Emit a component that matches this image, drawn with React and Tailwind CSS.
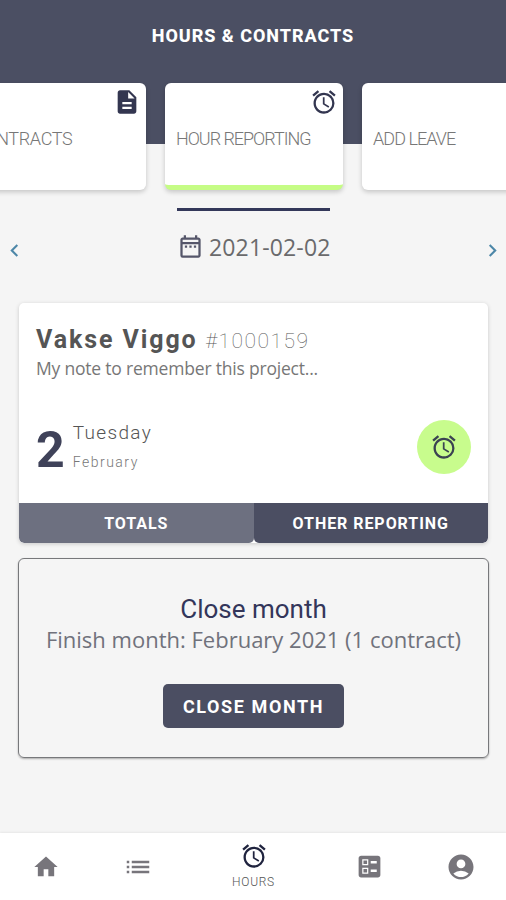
import React, { useState } from 'react';
import {
    MdAccessAlarm,
    MdAccountCircle,
    MdBallot,
    MdChevronLeft,
    MdChevronRight,
    MdDescription,
    MdHome,
    MdList,
    MdOutlineDateRange,
} from 'react-icons/md';

const TABS = [
    { id: 'contracts', label: 'CONTRACTS', icon: MdDescription, labelClass: '-ml-[6px] tracking-[-0.35px]' },
    { id: 'hours', label: 'HOUR REPORTING', icon: MdAccessAlarm, labelClass: 'tracking-[-1.03px]' },
    { id: 'leave', label: 'ADD LEAVE', icon: null, labelClass: 'tracking-[-0.95px]' },
];

const NAV = [
    { id: 'home', icon: MdHome, size: 28 },
    { id: 'list', icon: MdList, size: 30 },
    { id: 'hours', icon: MdAccessAlarm, size: 28, label: 'HOURS' },
    { id: 'reports', icon: MdBallot, size: 29 },
    { id: 'profile', icon: MdAccountCircle, size: 30 },
];

function Header({ activeTab, onSelect }) {
    return (
        <header className="h-[144px] shrink-0 bg-[#4b4f63]">
            <h1 className="h-[83px] pt-[22px] text-center text-[18px] leading-[28px] font-extrabold tracking-[0.95px] text-white">HOURS &amp; CONTRACTS</h1>
            <div className="-ml-[32px] flex w-[572px] gap-[19px]">
                {TABS.map(({ id, label, icon: Icon, labelClass }) => (
                    <button
                        key={id}
                        onClick={() => onSelect(id)}
                        className={`flex h-[107px] w-[178px] shrink-0 flex-col overflow-hidden rounded-[6px] border-b-[5px] bg-white px-[11px] text-left shadow-[0_2px_5px_rgba(0,0,0,0.2)] ${activeTab === id ? 'border-[#c5fc85]' : 'border-white'}`}
                    >
                        <span className="-mr-[6px] flex h-[43px] justify-end pt-[5px] text-[#333650]">{Icon && <Icon size={28} />}</span>
                        <span className={`text-[18px] leading-[25px] font-light whitespace-nowrap text-[#777] ${labelClass}`}>{label}</span>
                    </button>
                ))}
            </div>
        </header>
    );
}

function DatePicker({ date }) {
    return (
        <div className="mt-[64px] flex h-[95px] items-start justify-between">
            <button className="mt-[30px] ml-[2px] text-[#4d87a8]"><MdChevronLeft size={25} /></button>
            <div className="flex h-[54px] w-[153px] items-center border-t-[3px] border-[#33385a] pt-[20px] text-[#6a6a6c]">
                <MdOutlineDateRange size={27} className="shrink-0 text-[#55566a]" />
                <span className="ml-[5px] font-['Open_Sans',sans-serif] text-[23px] leading-[30px] tracking-[0.15px] whitespace-nowrap">{date}</span>
            </div>
            <button className="mt-[30px] mr-px text-[#4d87a8]"><MdChevronRight size={25} /></button>
        </div>
    );
}

function ContractCard() {
    return (
        <section className="mr-[18px] ml-[19px] h-[240px] overflow-hidden rounded-[5px] bg-white shadow-[0_1px_4px_rgba(0,0,0,0.18)]">
            <div className="h-[200px] px-[17px] pt-[21px]">
                <div className="flex h-[31px] items-baseline whitespace-nowrap">
                    <h2 className="text-[25px] leading-[31px] font-bold tracking-[1.9px] text-[#555]">Vakse Viggo</h2>
                    <span className="ml-[8px] text-[21px] font-thin tracking-[1.5px] text-[#555]">#1000159</span>
                </div>
                <p className="font-['Open_Sans',sans-serif] text-[17.5px] leading-[27px] tracking-[-0.2px] text-[#777]">My note to remember this project...</p>
                <div className="mt-[32px] flex items-center">
                    <span className="mt-[6px] text-[50px] leading-[60px] font-bold text-[#3f4259]">2</span>
                    <div className="ml-[8px] flex flex-col">
                        <span className="text-[19px] leading-[30px] font-light tracking-[1.35px] text-[#555]">Tuesday</span>
                        <span className="text-[14px] leading-[29px] font-light tracking-[1.5px] text-[#777]">February</span>
                    </div>
                    <button className="ml-auto flex size-[54px] items-center justify-center rounded-full bg-[#c8fc8d] text-[#3b4352]"><MdAccessAlarm size={28} /></button>
                </div>
            </div>
            <div className="flex h-[40px] text-[16px] font-bold text-white">
                <button className="flex-1 rounded-b-[5px] bg-[#6d7080] pt-px tracking-[0.95px]">TOTALS</button>
                <button className="flex-1 rounded-b-[5px] bg-[#4b4e62] pt-px tracking-[0.95px]">OTHER REPORTING</button>
            </div>
        </section>
    );
}

function CloseMonth() {
    return (
        <section className="mt-[15px] mr-[17px] ml-[18px] flex h-[200px] flex-col items-center rounded-[6px] border border-[#77787b] pt-[35px] shadow-[0_1px_2px_rgba(0,0,0,0.3)]">
            <h2 className="text-[26px] leading-[30px] text-[#33365a]">Close month</h2>
            <p className="font-['Open_Sans',sans-serif] text-[22px] leading-[30px] whitespace-nowrap text-[#70727c]">Finish month: February 2021 (1 contract)</p>
            <button className="mt-[30px] h-[44px] w-[181px] rounded-[5px] bg-[#4b4e62] text-[18px] font-bold tracking-[1.6px] whitespace-nowrap text-white">CLOSE MONTH</button>
        </section>
    );
}

function BottomNav() {
    return (
        <nav className="mt-auto grid h-[67px] grid-cols-[92px_92px_139px_92px_91px] bg-white shadow-[0_-1px_2px_rgba(0,0,0,0.06)]">
            {NAV.map(({ id, icon: Icon, size, label }) => (
                <button key={id} className={`flex flex-col items-center justify-center ${label ? 'pt-px text-[#20243f]' : 'text-[#77757b]'}`}>
                    <Icon size={size} />
                    {label && <span className="mt-[2px] text-[12px] leading-[20px] font-light tracking-[0.7px] text-[#555]">{label}</span>}
                </button>
            ))}
        </nav>
    );
}

export default function App() {
    const [activeTab, setActiveTab] = useState('hours');

    return (
        <div className="flex h-screen w-full flex-col overflow-hidden bg-[#f5f5f5] font-['Roboto',sans-serif]">
            <Header activeTab={activeTab} onSelect={setActiveTab} />
            <DatePicker date="2021-02-02" />
            <ContractCard />
            <CloseMonth />
            <BottomNav />
        </div>
    );
}
